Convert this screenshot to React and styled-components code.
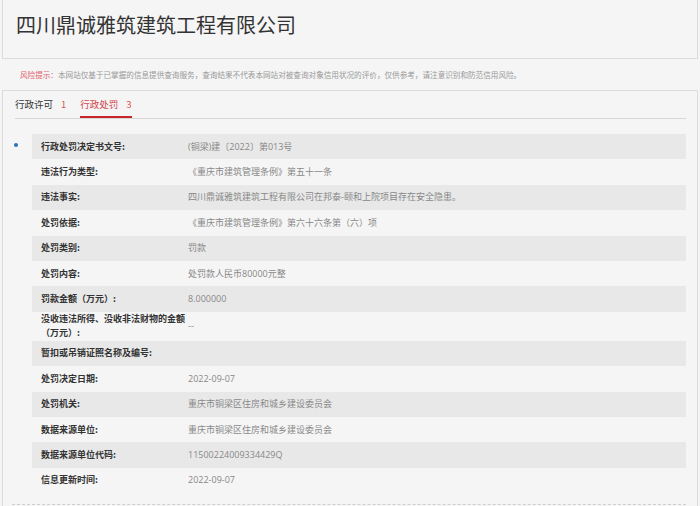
import React from "react";
import styled, { createGlobalStyle } from "styled-components";

const Global = createGlobalStyle`
  html, body { margin: 0; padding: 0; background: #f5f5f5; overflow: hidden; }
  body { font-family: "Open Sans", "Noto Sans CJK SC", sans-serif; }
  * { box-sizing: border-box; }
`;

const Page = styled.div`
  width: 698px;
  padding-left: 2px;
`;

const Header = styled.div`
  margin-top: -1px;
  height: 60px;
  border: 1px solid #dcdcdc;
  padding: 11px 0 0 13px;
`;

const Title = styled.h1`
  margin: 0;
  font-family: "Noto Sans CJK SC", sans-serif;
  font-weight: 400;
  font-size: 20px;
  line-height: 28px;
  color: #333;
`;

const Notice = styled.div`
  height: 31px;
  line-height: 31px;
  padding-left: 18px;
  font-size: 7.6px;
  color: #999;
  font-family: "Noto Sans CJK SC", sans-serif;
  white-space: nowrap;
`;

const NoticeTag = styled.span`
  color: #e0606a;
`;

const Panel = styled.div`
  border: 1px solid #dcdcdc;
  border-bottom: none;
  padding: 0 11px 0 9px;
  height: 430px;
`;

const TabBar = styled.div`
  display: flex;
  gap: 14px;
  height: 28px;
  margin-left: 3px;
  border-bottom: 1px solid #d6d6d6;
`;

const Tab = styled.div`
  height: 27px;
  display: flex;
  align-items: center;
  border-bottom: 2px solid ${(p) => (p.$active ? "#c9252f" : "transparent")};
  font-family: "Noto Sans CJK SC", sans-serif;
  font-size: 9.5px;
  color: ${(p) => (p.$active ? "#d2434b" : "#333")};
`;

const Count = styled.span`
  margin-left: 8px;
  color: #e0505a;
`;

const Record = styled.div`
  display: flex;
  margin-top: 15px;
`;

const Bullet = styled.div`
  width: 20px;
  flex: none;
  &::before {
    content: "";
    display: block;
    width: 4px;
    height: 4px;
    border-radius: 50%;
    background: #2d6fbf;
    margin: 9px 0 0 2px;
  }
`;

const Rows = styled.div`
  flex: 1;
`;

const Row = styled.div`
  display: flex;
  align-items: center;
  min-height: 25.4px;
  padding: 0.5px 0;
  background: ${(p) => (p.$shade ? "#e8e8e8" : "transparent")};
`;

const Label = styled.div`
  width: 156px;
  flex: none;
  padding-left: 9px;
  font-family: "Noto Sans CJK SC", sans-serif;
  font-weight: 700;
  font-size: 9px;
  line-height: 14px;
  color: #333;
`;

const Value = styled.div`
  flex: 1;
  font-family: "Open Sans", "Noto Sans CJK SC", sans-serif;
  font-size: 9px;
  line-height: 14px;
  color: #888;
`;

const Divider = styled.div`
  margin-top: 11px;
  border-top: 1px dashed #cfcfcf;
`;

const rows = [
  ["行政处罚决定书文号:", "(铜梁)建〔2022〕第013号"],
  ["违法行为类型:", "《重庆市建筑管理条例》第五十一条"],
  ["违法事实:", "四川鼎诚雅筑建筑工程有限公司在邦泰-颐和上院项目存在安全隐患。"],
  ["处罚依据:", "《重庆市建筑管理条例》第六十六条第（六）项"],
  ["处罚类别:", "罚款"],
  ["处罚内容:", "处罚款人民币80000元整"],
  ["罚款金额（万元）:", "8.000000"],
  ["没收违法所得、没收非法财物的金额（万元）:", "--"],
  ["暂扣或吊销证照名称及编号:", ""],
  ["处罚决定日期:", "2022-09-07"],
  ["处罚机关:", "重庆市铜梁区住房和城乡建设委员会"],
  ["数据来源单位:", "重庆市铜梁区住房和城乡建设委员会"],
  ["数据来源单位代码:", "11500224009334429Q"],
  ["信息更新时间:", "2022-09-07"],
];

export default function App() {
  return (
    <Page>
      <Global />
      <Header>
        <Title>四川鼎诚雅筑建筑工程有限公司</Title>
      </Header>
      <Notice>
        <NoticeTag>风险提示：</NoticeTag>
        本网站仅基于已掌握的信息提供查询服务，查询结果不代表本网站对被查询对象信用状况的评价，仅供参考，请注意识别和防范信用风险。
      </Notice>
      <Panel>
        <TabBar>
          <Tab>
            行政许可<Count>1</Count>
          </Tab>
          <Tab $active>
            行政处罚<Count>3</Count>
          </Tab>
        </TabBar>
        <Record>
          <Bullet />
          <Rows>
            {rows.map(([k, v], i) => (
              <Row key={k} $shade={i % 2 === 0}>
                <Label>{k}</Label>
                <Value>{v}</Value>
              </Row>
            ))}
          </Rows>
        </Record>
        <Divider />
      </Panel>
    </Page>
  );
}
